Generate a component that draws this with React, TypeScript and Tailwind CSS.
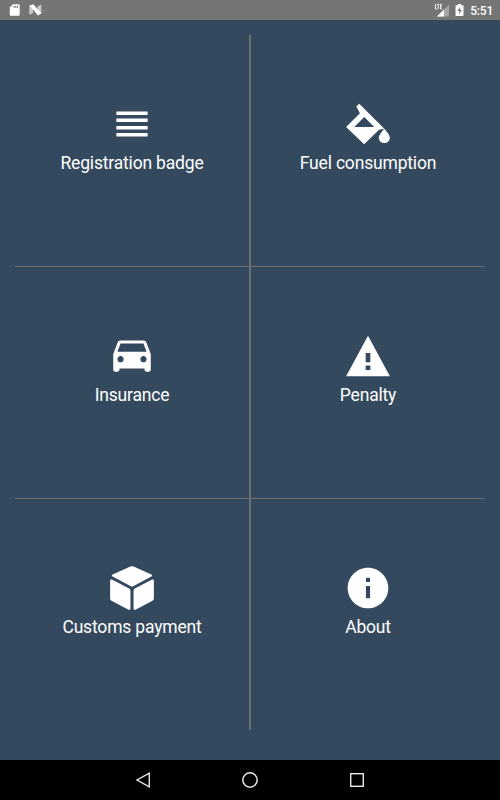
import React from 'react';
import {
  IoMdReorder,
  IoMdColorFill,
  IoMdCar,
  IoMdWarning,
  IoMdCube,
  IoMdInformationCircle,
} from 'react-icons/io';
import type { IconType } from 'react-icons';

interface MenuItem {
  title: string;
  icon: IconType;
}

const MENU: MenuItem[] = [
  { title: 'Registration badge', icon: IoMdReorder },
  { title: 'Fuel consumption', icon: IoMdColorFill },
  { title: 'Insurance', icon: IoMdCar },
  { title: 'Penalty', icon: IoMdWarning },
  { title: 'Customs payment', icon: IoMdCube },
  { title: 'About', icon: IoMdInformationCircle },
];

const StatusBar: React.FC = () => (
  <header className="flex h-5 items-center justify-between bg-[#757575] pl-[9px] pr-[7px] text-white">
    <div className="flex items-center gap-[9px]">
      {/* SD card */}
      <svg width="11" height="12" viewBox="0 0 11 12">
        <path d="M4 0.200H9.700a1 1 0 0 1 1 1v9.600a1 1 0 0 1-1 1H1.800a1 1 0 0 1-1-1V3.400z" fill="#fff" />
        <path d="M4.500 1.800h1v2.200h-1zM6.300 1.800h1v2.200h-1zM8.100 1.800h1v2.200h-1z" fill="#757575" />
      </svg>
      {/* Android N */}
      <svg width="13" height="12" viewBox="0 0 13 12">
        <path d="M0.300 1.500L4 2v7L0.300 11zM12.300 0.500v9.800L8.500 9V2.500z" fill="#c9c9c9" />
        <path d="M0.600 1.500L4.300 0.200 12.300 9.300 9 11.500z" fill="#fff" />
      </svg>
    </div>
    <div className="flex items-center">
      <svg width="16" height="14" viewBox="0 0 16 14" className="mr-[5px]">
        <path d="M15 1.500v12H3z" fill="#a6a6a6" />
        <path d="M10 6.500v7H3z" fill="#fff" />
        <path d="M1.400 1v5h1.600M3 1.400h2.400M4.200 1.400V6.300M8.200 1.400H6.500v4.500h1.700M6.500 3.600h1.500" fill="none" stroke="#fff" strokeWidth="0.9" />
      </svg>
      <svg width="9" height="12" viewBox="0 0 9 12" className="mr-[6px]">
        <path d="M3 0h3v1.200h1.800a.7.7 0 0 1 .7.700v9.400a.7.7 0 0 1-.7.700H1.200a.7.7 0 0 1-.7-.700V1.900a.7.7 0 0 1 .7-.700H3z" fill="#fff" />
        <path d="M5.200 2.800L2.500 7h1.700v3.200L6.700 6H5.200z" fill="#757575" />
      </svg>
      <span className="pt-px text-[12px] leading-5 font-medium tracking-[-0.2px]">5:51</span>
    </div>
  </header>
);

const MenuCell: React.FC<{ item: MenuItem; index: number }> = ({ item, index }) => {
  const Icon = item.icon;
  return (
    <button
      className={`flex flex-col items-center gap-0.5 border-[#6d7072] pt-16 ${index % 2 === 0 ? 'border-r-2' : ''} ${index < 4 ? 'border-b' : ''}`}
    >
      <Icon size={50} />
      <span className="text-[17.500px] leading-6 tracking-[-0.18px] whitespace-nowrap">{item.title}</span>
    </button>
  );
};

const NavigationBar: React.FC = () => (
  <nav className="flex h-10 items-center justify-center gap-[91px] bg-black">
    <svg width="16" height="16" viewBox="0 0 16 16" fill="none" stroke="#e8e8e8" strokeWidth="1.400">
      <path d="M14.300 1.200v13.600L2 8z" />
    </svg>
    <svg width="16" height="16" viewBox="0 0 16 16" fill="none" stroke="#e8e8e8" strokeWidth="1.500">
      <circle cx="8" cy="8" r="7.200" />
    </svg>
    <svg width="16" height="16" viewBox="0 0 16 16" fill="none" stroke="#e8e8e8" strokeWidth="1.400">
      <rect x="1.700" y="1.700" width="12.600" height="12.600" />
    </svg>
  </nav>
);

export default function App() {
  return (
    <div className="flex h-screen w-full flex-col bg-[#34495e] font-['Roboto',sans-serif] text-white">
      <StatusBar />
      <main className="flex-1 px-[15px] pt-[15px]">
        <div className="grid grid-cols-[236px_234px] grid-rows-[232px_232px_231px]">
          {MENU.map((item, index) => (
            <MenuCell key={item.title} item={item} index={index} />
          ))}
        </div>
      </main>
      <NavigationBar />
    </div>
  );
}
